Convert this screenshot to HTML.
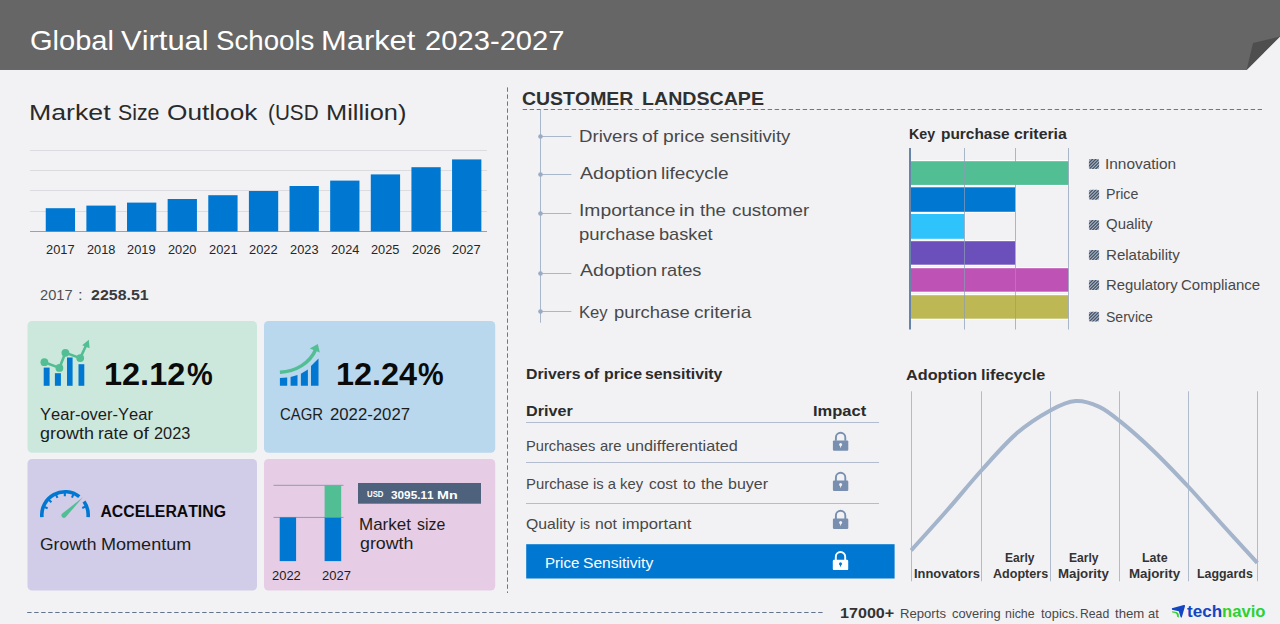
<!DOCTYPE html>
<html><head><meta charset="utf-8"><title>Global Virtual Schools Market 2023-2027</title>
<style>
html,body{margin:0;padding:0;}
body{width:1280px;height:624px;overflow:hidden;background:#f2f2f5;font-family:"Liberation Sans",sans-serif;position:relative;font-kerning:none;}
svg{position:absolute;left:0;top:0;}
span{position:absolute;white-space:nowrap;display:block;transform-origin:0 0;}
</style></head><body>
<svg width="1280" height="624" viewBox="0 0 1280 624">
<polygon points="0,0 1280,0 1280,36.5 1246.6,70 0,70" fill="#666666"/>
<polygon points="1246.6,70 1253,43 1280,36.5" fill="#4e4e4e"/>
<rect x="30" y="150" width="457" height="1" fill="#dcdce0"/>
<rect x="30" y="170" width="457" height="1" fill="#dcdce0"/>
<rect x="30" y="190" width="457" height="1" fill="#dcdce0"/>
<rect x="30" y="211" width="457" height="1" fill="#dcdce0"/>
<rect x="30" y="231" width="457" height="1" fill="#a0a0a4"/>
<rect x="45.75" y="208.2" width="29.3" height="23.20" fill="#0078d2"/>
<rect x="86.38" y="205.6" width="29.3" height="25.80" fill="#0078d2"/>
<rect x="127.01" y="202.6" width="29.3" height="28.80" fill="#0078d2"/>
<rect x="167.64" y="199" width="29.3" height="32.40" fill="#0078d2"/>
<rect x="208.27" y="195.2" width="29.3" height="36.20" fill="#0078d2"/>
<rect x="248.90" y="191" width="29.3" height="40.40" fill="#0078d2"/>
<rect x="289.53" y="186" width="29.3" height="45.40" fill="#0078d2"/>
<rect x="330.16" y="180.6" width="29.3" height="50.80" fill="#0078d2"/>
<rect x="370.79" y="174.4" width="29.3" height="57.00" fill="#0078d2"/>
<rect x="411.42" y="167.2" width="29.3" height="64.20" fill="#0078d2"/>
<rect x="452.05" y="159.4" width="29.3" height="72.00" fill="#0078d2"/>
<rect x="27.5" y="321" width="229.5" height="131.8" rx="4.5" fill="#cce8dd"/>
<rect x="264" y="321" width="231.2" height="131.8" rx="4.5" fill="#b9d7ed"/>
<rect x="27.5" y="459" width="229.5" height="131.6" rx="4.5" fill="#d1cce8"/>
<rect x="264" y="459" width="231.2" height="131.6" rx="4.5" fill="#e6cde5"/>
<rect x="43.7" y="367.6" width="5.9" height="18.20" fill="#0078d2"/>
<rect x="54.9" y="373.2" width="6" height="12.60" fill="#0078d2"/>
<rect x="67" y="357.5" width="5.6" height="28.30" fill="#0078d2"/>
<rect x="78.5" y="364.2" width="5.8" height="21.60" fill="#0078d2"/>
<polyline points="44.4,362.2 59.4,367.9 65.4,352.8 80.2,358.1 87,343.5" fill="none" stroke="#52be94" stroke-width="2.6" stroke-linejoin="round"/>
<circle cx="44.4" cy="362.2" r="3.9" fill="#52be94"/>
<circle cx="59.4" cy="367.9" r="3.9" fill="#52be94"/>
<circle cx="65.4" cy="352.8" r="3.9" fill="#52be94"/>
<circle cx="80.2" cy="358.1" r="3.9" fill="#52be94"/>
<polygon points="88.8,339.8 82.2,345.2 89.6,348.2" fill="#52be94"/>
<polygon points="279.9,378 287.2,377.6 287.2,385.8 279.9,385.8" fill="#0078d2"/>
<polygon points="290.6,377.1 297.5,374.9 297.5,385.8 290.6,385.8" fill="#0078d2"/>
<polygon points="300.9,373.8 307.9,369.5 307.9,385.8 300.9,385.8" fill="#0078d2"/>
<polygon points="311,365.9 318.5,358.6 318.5,385.8 311,385.8" fill="#0078d2"/>
<path d="M279.9,372.3 C296,371.5 310,363 316,349" fill="none" stroke="#52be94" stroke-width="3.4"/>
<polygon points="309.8,348.6 317.8,343.9 319.8,352.6" fill="#52be94"/>
<path d="M41.91,517.12 A23.2,23.2 0 0 1 79.28,496.62" fill="none" stroke="#0078d2" stroke-width="3.6"/>
<path d="M84.00,501.59 A23.2,23.2 0 0 1 88.09,517.12" fill="none" stroke="#0078d2" stroke-width="3.6"/>
<line x1="44.27" y1="506.94" x2="47.64" y2="508.23" stroke="#0078d2" stroke-width="2.1"/>
<line x1="48.76" y1="499.76" x2="51.40" y2="502.21" stroke="#0078d2" stroke-width="2.1"/>
<line x1="55.97" y1="494.62" x2="57.43" y2="497.91" stroke="#0078d2" stroke-width="2.1"/>
<line x1="64.81" y1="492.70" x2="64.84" y2="496.30" stroke="#0078d2" stroke-width="2.1"/>
<line x1="73.32" y1="494.32" x2="71.97" y2="497.65" stroke="#0078d2" stroke-width="2.1"/>
<line x1="85.58" y1="506.58" x2="82.25" y2="507.93" stroke="#0078d2" stroke-width="2.1"/>
<path d="M82.9,497.2 L62.3,513.6 A2.4,2.4 0 0 0 65.6,517.3 Z" fill="#52be94"/>
<rect x="273.5" y="484.8" width="70" height="1" fill="#8a9bb5"/>
<rect x="273.5" y="516.9" width="70" height="1" fill="#8a9bb5"/>
<rect x="279.7" y="517.4" width="16.4" height="43.7" fill="#0078d2"/>
<rect x="324.6" y="517.4" width="16.6" height="43.7" fill="#0078d2"/>
<rect x="324.6" y="485.3" width="16.6" height="32.1" fill="#52be94"/>
<rect x="358" y="483" width="123" height="20.7" fill="#4f627d"/>
<line x1="507.5" y1="87.4" x2="507.5" y2="593" stroke="#64789a" stroke-width="1" stroke-dasharray="4.4,2.6"/>
<line x1="522.7" y1="109.5" x2="1262" y2="109.5" stroke="#64789a" stroke-width="1" stroke-dasharray="4.4,2.6"/>
<line x1="27.2" y1="612.5" x2="823.2" y2="612.5" stroke="#62748c" stroke-width="1" stroke-dasharray="4.4,2.6"/>
<rect x="540" y="109.4" width="1" height="213.3" fill="#a9b7ca"/>
<rect x="540.4" y="136" width="31" height="1" fill="#a9b7ca"/>
<circle cx="540.5" cy="136.5" r="2.3" fill="#9aabc2"/>
<rect x="540.4" y="174" width="31" height="1" fill="#a9b7ca"/>
<circle cx="540.5" cy="174.5" r="2.3" fill="#9aabc2"/>
<rect x="540.4" y="213" width="31" height="1" fill="#a9b7ca"/>
<circle cx="540.5" cy="213.5" r="2.3" fill="#9aabc2"/>
<rect x="540.4" y="273" width="31" height="1" fill="#a9b7ca"/>
<circle cx="540.5" cy="273.5" r="2.3" fill="#9aabc2"/>
<rect x="540.4" y="311" width="31" height="1" fill="#a9b7ca"/>
<circle cx="540.5" cy="311.5" r="2.3" fill="#9aabc2"/>
<rect x="910.5" y="160.1" width="158.9" height="25.9" fill="#ffffff"/>
<rect x="910.5" y="161.2" width="157.9" height="23.7" fill="#52be94"/>
<rect x="910.5" y="186.2" width="105.7" height="26.7" fill="#ffffff"/>
<rect x="910.5" y="187.3" width="104.7" height="24.5" fill="#0078d2"/>
<rect x="910.5" y="212.9" width="54.9" height="27.0" fill="#ffffff"/>
<rect x="910.5" y="214" width="53.9" height="24.8" fill="#2fc3fb"/>
<rect x="910.5" y="240.1" width="105.7" height="25.7" fill="#ffffff"/>
<rect x="910.5" y="241.2" width="104.7" height="23.5" fill="#6b50bc"/>
<rect x="910.5" y="267.1" width="158.9" height="25.7" fill="#ffffff"/>
<rect x="910.5" y="268.2" width="157.9" height="23.5" fill="#be52b5"/>
<rect x="910.5" y="294.1" width="158.9" height="25.7" fill="#ffffff"/>
<rect x="910.5" y="295.2" width="157.9" height="23.5" fill="#bdb853"/>
<rect x="964" y="148" width="1" height="181.5" fill="#8a9bb5" fill-opacity="0.7"/>
<rect x="1015" y="148" width="1" height="181.5" fill="#8a9bb5" fill-opacity="0.7"/>
<rect x="1068" y="148" width="1" height="181.5" fill="#8a9bb5" fill-opacity="0.7"/>
<rect x="909" y="148" width="2" height="181.5" fill="#6685a8"/>
<defs><clipPath id="lc"><rect x="0" y="0" width="10.2" height="9.9" rx="1.7"/></clipPath><g id="lg" clip-path="url(#lc)"><rect width="10.2" height="9.9" fill="#a8bfdd"/><g stroke="#4b5159" stroke-width="1.3"><line x1="-11.3" y1="12" x2="2.6999999999999993" y2="-2"/><line x1="-8.100000000000001" y1="12" x2="5.899999999999999" y2="-2"/><line x1="-4.9" y1="12" x2="9.1" y2="-2"/><line x1="-1.6999999999999993" y1="12" x2="12.3" y2="-2"/><line x1="1.5" y1="12" x2="15.5" y2="-2"/><line x1="4.699999999999999" y1="12" x2="18.7" y2="-2"/><line x1="7.900000000000002" y1="12" x2="21.900000000000002" y2="-2"/><line x1="11.100000000000001" y1="12" x2="25.1" y2="-2"/></g></g></defs>
<use href="#lg" x="1088.9" y="159.0"/>
<use href="#lg" x="1088.9" y="189.8"/>
<use href="#lg" x="1088.9" y="220.1"/>
<use href="#lg" x="1088.9" y="250.0"/>
<use href="#lg" x="1088.9" y="280.1"/>
<use href="#lg" x="1088.9" y="311.7"/>
<rect x="526" y="422" width="353" height="1" fill="#b3bdcf"/>
<rect x="526" y="462" width="353" height="1" fill="#b3bdcf"/>
<rect x="526" y="503" width="353" height="1" fill="#b3bdcf"/>
<rect x="526.2" y="544.2" width="368.4" height="34.3" fill="#0078d2"/>
<rect x="832.90" y="440.40" width="15.4" height="10.4" rx="1.2" fill="#788fb0"/><path d="M835.90,440.80 V437.40 A4.7,4.7 0 0 1 845.30,437.40 V440.80" fill="none" stroke="#788fb0" stroke-width="1.9"/><circle cx="840.60" cy="444.40" r="1.5" fill="#f2f2f5"/><polygon points="839.70,445.00 841.50,445.00 840.60,448.20" fill="#f2f2f5"/>
<rect x="832.90" y="480.50" width="15.4" height="10.4" rx="1.2" fill="#788fb0"/><path d="M835.90,480.90 V477.50 A4.7,4.7 0 0 1 845.30,477.50 V480.90" fill="none" stroke="#788fb0" stroke-width="1.9"/><circle cx="840.60" cy="484.50" r="1.5" fill="#f2f2f5"/><polygon points="839.70,485.10 841.50,485.10 840.60,488.30" fill="#f2f2f5"/>
<rect x="832.90" y="518.50" width="15.4" height="10.4" rx="1.2" fill="#788fb0"/><path d="M835.90,518.90 V515.50 A4.7,4.7 0 0 1 845.30,515.50 V518.90" fill="none" stroke="#788fb0" stroke-width="1.9"/><circle cx="840.60" cy="522.50" r="1.5" fill="#f2f2f5"/><polygon points="839.70,523.10 841.50,523.10 840.60,526.30" fill="#f2f2f5"/>
<rect x="832.80" y="559.70" width="15.4" height="10.4" rx="1.2" fill="#ffffff"/><path d="M835.80,560.10 V556.70 A4.7,4.7 0 0 1 845.20,556.70 V560.10" fill="none" stroke="#ffffff" stroke-width="1.9"/><circle cx="840.50" cy="563.70" r="1.5" fill="#0078d2"/><polygon points="839.60,564.30 841.40,564.30 840.50,567.50" fill="#0078d2"/>
<rect x="911" y="391.3" width="1" height="190" fill="#b0bccd"/>
<rect x="981" y="391.3" width="1" height="190" fill="#b0bccd"/>
<rect x="1050" y="391.3" width="1" height="190" fill="#b0bccd"/>
<rect x="1119" y="391.3" width="1" height="190" fill="#b0bccd"/>
<rect x="1188" y="391.3" width="1" height="190" fill="#b0bccd"/>
<rect x="1257" y="391.3" width="1" height="190" fill="#b0bccd"/>
<path d="M911.2,550.3 C917.1,543.8 934.7,524.4 946.5,511.0 C958.3,497.6 970.0,483.0 981.8,470.0 C993.5,457.0 1005.5,443.1 1017.0,433.1 C1028.5,423.1 1040.9,415.6 1050.7,410.2 C1060.5,404.8 1067.7,401.6 1075.7,401.0 C1083.7,400.4 1091.5,403.3 1098.8,406.6 C1106.1,409.9 1110.5,413.5 1119.6,420.9 C1128.7,428.2 1141.8,439.7 1153.3,450.7 C1164.8,461.7 1177.1,474.7 1188.6,487.0 C1200.1,499.3 1210.8,511.9 1222.2,524.5 C1233.7,537.1 1251.5,556.4 1257.3,562.8" fill="none" stroke="#a3b4cb" stroke-width="4" stroke-linecap="butt"/>
<path d="M1171.9,608.3 L1183.8,605.1 Q1185.3,604.8 1185,606.3 L1181.9,617.1 Q1181.3,618.2 1180.6,617 L1178.8,611.3 L1172,609.8 Z" fill="#1446c4"/>
<path d="M1172.1,611.2 L1176.6,611.9 Q1178.5,612.5 1178.7,614.2 L1178.9,617.4 L1177.3,617 L1176.6,614.3 Q1176.2,613.2 1175.1,613 L1172.1,612.4 Z" fill="#2fd032"/>
</svg>
<span style="left:29.69px;top:24px;font-size:28.5px;line-height:32px;color:#ffffff;transform:scaleX(1.0184);">Global</span>
<span style="left:120.91px;top:24px;font-size:28.5px;line-height:32px;color:#ffffff;transform:scaleX(1.0857);">Virtual</span>
<span style="left:215.89px;top:24px;font-size:28.5px;line-height:32px;color:#ffffff;transform:scaleX(0.9710);">Schools</span>
<span style="left:321.12px;top:24px;font-size:28.5px;line-height:32px;color:#ffffff;transform:scaleX(1.0833);">Market</span>
<span style="left:425.38px;top:24px;font-size:28.5px;line-height:32px;color:#ffffff;transform:scaleX(1.0238);">2023-2027</span>
<span style="left:28.96px;top:100px;font-size:22px;line-height:25px;color:#2a2a2a;transform:scaleX(1.2134);">Market</span>
<span style="left:117.68px;top:100px;font-size:22px;line-height:25px;color:#2a2a2a;transform:scaleX(0.9677);">Size</span>
<span style="left:167.41px;top:100px;font-size:22px;line-height:25px;color:#2a2a2a;transform:scaleX(1.1924);">Outlook</span>
<span style="left:267.97px;top:100px;font-size:22px;line-height:25px;color:#2a2a2a;transform:scaleX(0.9404);">(USD</span>
<span style="left:325.97px;top:100px;font-size:22px;line-height:25px;color:#2a2a2a;transform:scaleX(1.1533);">Million)</span>
<span style="left:46.10px;top:242px;font-size:13.33px;line-height:15px;color:#262626;transform:scaleX(0.9642);">2017</span>
<span style="left:86.74px;top:242px;font-size:13.33px;line-height:15px;color:#262626;transform:scaleX(0.9611);">2018</span>
<span style="left:127.36px;top:242px;font-size:13.33px;line-height:15px;color:#262626;transform:scaleX(0.9629);">2019</span>
<span style="left:168.00px;top:242px;font-size:13.33px;line-height:15px;color:#262626;transform:scaleX(0.9591);">2020</span>
<span style="left:208.62px;top:242px;font-size:13.33px;line-height:15px;color:#262626;transform:scaleX(0.9635);">2021</span>
<span style="left:249.25px;top:242px;font-size:13.33px;line-height:15px;color:#262626;transform:scaleX(0.9642);">2022</span>
<span style="left:289.89px;top:242px;font-size:13.33px;line-height:15px;color:#262626;transform:scaleX(0.9613);">2023</span>
<span style="left:330.52px;top:242px;font-size:13.33px;line-height:15px;color:#262626;transform:scaleX(0.9548);">2024</span>
<span style="left:371.15px;top:242px;font-size:13.33px;line-height:15px;color:#262626;transform:scaleX(0.9605);">2025</span>
<span style="left:411.78px;top:242px;font-size:13.33px;line-height:15px;color:#262626;transform:scaleX(0.9613);">2026</span>
<span style="left:452.40px;top:242px;font-size:13.33px;line-height:15px;color:#262626;transform:scaleX(0.9642);">2027</span>
<span style="left:40.11px;top:286px;font-size:15.3px;line-height:17px;color:#505050;transform:scaleX(0.9585);">2017</span>
<span style="left:78.12px;top:286px;font-size:15.3px;line-height:17px;color:#505050;transform:scaleX(1.0983);">:</span>
<span style="left:90.60px;top:286px;font-size:15.3px;line-height:17px;font-weight:700;color:#3a3a3a;transform:scaleX(1.0433);">2258.51</span>
<span style="left:104.21px;top:356px;font-size:32px;line-height:36px;font-weight:700;color:#0a0a0a;transform:scaleX(1.0146);">12.12</span>
<span style="left:187.28px;top:356px;font-size:32px;line-height:36px;font-weight:700;color:#0a0a0a;transform:scaleX(0.9044);">%</span>
<span style="left:40.19px;top:406px;font-size:15.8px;line-height:17px;color:#1c1c1c;transform:scaleX(1.0456);">Year-over-Year</span>
<span style="left:39.80px;top:425px;font-size:15.8px;line-height:17px;color:#1c1c1c;transform:scaleX(1.1359);">growth</span>
<span style="left:98.49px;top:425px;font-size:15.8px;line-height:17px;color:#1c1c1c;transform:scaleX(1.1070);">rate</span>
<span style="left:133.20px;top:425px;font-size:15.8px;line-height:17px;color:#1c1c1c;transform:scaleX(1.2085);">of</span>
<span style="left:154.18px;top:425px;font-size:15.8px;line-height:17px;color:#1c1c1c;transform:scaleX(1.0324);">2023</span>
<span style="left:335.71px;top:356px;font-size:32px;line-height:36px;font-weight:700;color:#0a0a0a;transform:scaleX(1.0130);">12.24</span>
<span style="left:418.28px;top:356px;font-size:32px;line-height:36px;font-weight:700;color:#0a0a0a;transform:scaleX(0.9007);">%</span>
<span style="left:280.09px;top:406px;font-size:15.9px;line-height:17px;color:#1c1c1c;transform:scaleX(0.9393);">CAGR</span>
<span style="left:330.01px;top:406px;font-size:15.9px;line-height:17px;color:#1c1c1c;transform:scaleX(1.0532);">2022-2027</span>
<span style="left:100.46px;top:503px;font-size:15.8px;line-height:17px;font-weight:700;color:#0a0a0a;">ACCELERATING</span>
<span style="left:39.67px;top:536px;font-size:15.8px;line-height:17px;color:#1c1c1c;transform:scaleX(1.1078);">Growth</span>
<span style="left:100.67px;top:536px;font-size:15.8px;line-height:17px;color:#1c1c1c;transform:scaleX(1.1423);">Momentum</span>
<span style="left:272.00px;top:568px;font-size:13.6px;line-height:15px;color:#1c1c1c;transform:scaleX(0.9520);">2022</span>
<span style="left:322.10px;top:568px;font-size:13.6px;line-height:15px;color:#1c1c1c;transform:scaleX(0.9555);">2027</span>
<span style="left:367.18px;top:488px;font-size:9.5px;line-height:11px;font-weight:700;color:#ffffff;transform:scaleX(0.8225);">USD</span>
<span style="left:390.88px;top:489px;font-size:11.2px;line-height:12px;font-weight:700;color:#ffffff;transform:scaleX(1.0522);">3095.11</span>
<span style="left:436.89px;top:489px;font-size:11.2px;line-height:12px;font-weight:700;color:#ffffff;transform:scaleX(1.2765);">Mn</span>
<span style="left:359.46px;top:515px;font-size:16.2px;line-height:18px;color:#1c1c1c;transform:scaleX(1.0486);">Market</span>
<span style="left:417.31px;top:515px;font-size:16.2px;line-height:18px;color:#1c1c1c;transform:scaleX(0.9805);">size</span>
<span style="left:360.10px;top:534px;font-size:16.2px;line-height:18px;color:#1c1c1c;transform:scaleX(1.1004);">growth</span>
<span style="left:522.15px;top:88px;font-size:19px;line-height:21px;font-weight:700;color:#303030;transform:scaleX(1.0246);">CUSTOMER</span>
<span style="left:642.34px;top:88px;font-size:19px;line-height:21px;font-weight:700;color:#303030;transform:scaleX(1.0317);">LANDSCAPE</span>
<span style="left:578.82px;top:127px;font-size:17px;line-height:19px;color:#484848;transform:scaleX(1.0961);">Drivers</span>
<span style="left:642.24px;top:127px;font-size:17px;line-height:19px;color:#484848;transform:scaleX(1.1343);">of</span>
<span style="left:662.81px;top:127px;font-size:17px;line-height:19px;color:#484848;transform:scaleX(1.1316);">price</span>
<span style="left:709.53px;top:127px;font-size:17px;line-height:19px;color:#484848;transform:scaleX(1.0905);">sensitivity</span>
<span style="left:579.61px;top:164px;font-size:17px;line-height:19px;color:#484848;transform:scaleX(1.1520);">Adoption</span>
<span style="left:661.47px;top:164px;font-size:17px;line-height:19px;color:#484848;transform:scaleX(1.1185);">lifecycle</span>
<span style="left:578.67px;top:201px;font-size:17px;line-height:19px;color:#484848;transform:scaleX(1.1340);">Importance</span>
<span style="left:679.29px;top:201px;font-size:17px;line-height:19px;color:#484848;transform:scaleX(1.1920);">in</span>
<span style="left:699.87px;top:201px;font-size:17px;line-height:19px;color:#484848;transform:scaleX(1.1008);">the</span>
<span style="left:731.55px;top:201px;font-size:17px;line-height:19px;color:#484848;transform:scaleX(1.1044);">customer</span>
<span style="left:578.96px;top:225px;font-size:17px;line-height:19px;color:#484848;transform:scaleX(1.0869);">purchase</span>
<span style="left:659.28px;top:225px;font-size:17px;line-height:19px;color:#484848;transform:scaleX(1.0703);">basket</span>
<span style="left:579.71px;top:261px;font-size:17px;line-height:19px;color:#484848;transform:scaleX(1.1504);">Adoption</span>
<span style="left:661.24px;top:261px;font-size:17px;line-height:19px;color:#484848;transform:scaleX(1.0693);">rates</span>
<span style="left:579.18px;top:303px;font-size:17px;line-height:19px;color:#484848;transform:scaleX(0.9797);">Key</span>
<span style="left:614.36px;top:303px;font-size:17px;line-height:19px;color:#484848;transform:scaleX(1.0825);">purchase</span>
<span style="left:694.44px;top:303px;font-size:17px;line-height:19px;color:#484848;transform:scaleX(1.1236);">criteria</span>
<span style="left:908.90px;top:126px;font-size:14.5px;line-height:16px;font-weight:700;color:#2b2b2b;transform:scaleX(0.9823);">Key</span>
<span style="left:940.73px;top:126px;font-size:14.5px;line-height:16px;font-weight:700;color:#2b2b2b;transform:scaleX(1.0632);">purchase</span>
<span style="left:1013.53px;top:126px;font-size:14.5px;line-height:16px;font-weight:700;color:#2b2b2b;transform:scaleX(1.0921);">criteria</span>
<span style="left:1105.43px;top:156px;font-size:14.6px;line-height:16px;color:#484848;transform:scaleX(1.0556);">Innovation</span>
<span style="left:1105.68px;top:186px;font-size:14.6px;line-height:16px;color:#484848;transform:scaleX(0.9740);">Price</span>
<span style="left:1106.14px;top:216px;font-size:14.6px;line-height:16px;color:#484848;transform:scaleX(1.0242);">Quality</span>
<span style="left:1105.61px;top:247px;font-size:14.6px;line-height:16px;color:#484848;transform:scaleX(1.0330);">Relatability</span>
<span style="left:1105.63px;top:277px;font-size:14.6px;line-height:16px;color:#484848;transform:scaleX(1.0162);">Regulatory</span>
<span style="left:1180.79px;top:277px;font-size:14.6px;line-height:16px;color:#484848;transform:scaleX(1.0277);">Compliance</span>
<span style="left:1106.21px;top:309px;font-size:14.6px;line-height:16px;color:#484848;transform:scaleX(0.9626);">Service</span>
<span style="left:525.89px;top:366px;font-size:14.6px;line-height:16px;font-weight:700;color:#2b2b2b;transform:scaleX(1.0831);">Drivers</span>
<span style="left:584.22px;top:366px;font-size:14.6px;line-height:16px;font-weight:700;color:#2b2b2b;transform:scaleX(1.1029);">of</span>
<span style="left:603.60px;top:366px;font-size:14.6px;line-height:16px;font-weight:700;color:#2b2b2b;transform:scaleX(1.0887);">price</span>
<span style="left:644.99px;top:366px;font-size:14.6px;line-height:16px;font-weight:700;color:#2b2b2b;transform:scaleX(1.0845);">sensitivity</span>
<span style="left:525.87px;top:403px;font-size:14.6px;line-height:16px;font-weight:700;color:#2b2b2b;transform:scaleX(1.1072);">Driver</span>
<span style="left:813.15px;top:403px;font-size:14.6px;line-height:16px;font-weight:700;color:#2b2b2b;transform:scaleX(1.1306);">Impact</span>
<span style="left:525.75px;top:438px;font-size:14.5px;line-height:16px;color:#484848;transform:scaleX(1.0121);">Purchases</span>
<span style="left:599.92px;top:438px;font-size:14.5px;line-height:16px;color:#484848;transform:scaleX(1.0255);">are</span>
<span style="left:625.50px;top:438px;font-size:14.5px;line-height:16px;color:#484848;transform:scaleX(1.1174);">undifferentiated</span>
<span style="left:525.73px;top:476px;font-size:14.5px;line-height:16px;color:#484848;transform:scaleX(1.0249);">Purchase</span>
<span style="left:593.06px;top:476px;font-size:14.5px;line-height:16px;color:#484848;transform:scaleX(1.0195);">is a key</span>
<span style="left:649.10px;top:476px;font-size:14.5px;line-height:16px;color:#484848;transform:scaleX(1.0630);">cost</span>
<span style="left:682.62px;top:476px;font-size:14.5px;line-height:16px;color:#484848;transform:scaleX(1.0387);">to</span>
<span style="left:700.91px;top:476px;font-size:14.5px;line-height:16px;color:#484848;transform:scaleX(1.0988);">the</span>
<span style="left:727.92px;top:476px;font-size:14.5px;line-height:16px;color:#484848;transform:scaleX(1.1027);">buyer</span>
<span style="left:526.20px;top:516px;font-size:14.5px;line-height:16px;color:#484848;transform:scaleX(1.0875);">Quality</span>
<span style="left:580.31px;top:516px;font-size:14.5px;line-height:16px;color:#484848;transform:scaleX(0.9691);">is</span>
<span style="left:595.01px;top:516px;font-size:14.5px;line-height:16px;color:#484848;transform:scaleX(1.0845);">not</span>
<span style="left:622.24px;top:516px;font-size:14.5px;line-height:16px;color:#484848;transform:scaleX(1.1471);">important</span>
<span style="left:544.51px;top:555px;font-size:14.8px;line-height:16px;color:#ffffff;transform:scaleX(1.0173);">Price</span>
<span style="left:583.14px;top:555px;font-size:14.8px;line-height:16px;color:#ffffff;transform:scaleX(1.0543);">Sensitivity</span>
<span style="left:906.10px;top:367px;font-size:14.5px;line-height:16px;font-weight:700;color:#2b2b2b;transform:scaleX(1.1202);">Adoption</span>
<span style="left:980.81px;top:367px;font-size:14.5px;line-height:16px;font-weight:700;color:#2b2b2b;transform:scaleX(1.1215);">lifecycle</span>
<span style="left:914.19px;top:567px;font-size:12.7px;line-height:14px;font-weight:700;color:#333333;transform:scaleX(1.0165);">Innovators</span>
<span style="left:1005.14px;top:551px;font-size:12.7px;line-height:14px;font-weight:700;color:#333333;transform:scaleX(0.9486);">Early</span>
<span style="left:992.74px;top:567px;font-size:12.7px;line-height:14px;font-weight:700;color:#333333;transform:scaleX(0.9908);">Adopters</span>
<span style="left:1069.24px;top:551px;font-size:12.7px;line-height:14px;font-weight:700;color:#333333;transform:scaleX(0.9519);">Early</span>
<span style="left:1058.26px;top:567px;font-size:12.7px;line-height:14px;font-weight:700;color:#333333;transform:scaleX(1.0445);">Majority</span>
<span style="left:1142.22px;top:551px;font-size:12.7px;line-height:14px;font-weight:700;color:#333333;transform:scaleX(0.9827);">Late</span>
<span style="left:1129.26px;top:567px;font-size:12.7px;line-height:14px;font-weight:700;color:#333333;transform:scaleX(1.0508);">Majority</span>
<span style="left:1197.22px;top:567px;font-size:12.7px;line-height:14px;font-weight:700;color:#333333;transform:scaleX(0.9768);">Laggards</span>
<span style="left:840.43px;top:605px;font-size:14.8px;line-height:16px;font-weight:700;color:#333333;transform:scaleX(1.0898);">17000+</span>
<span style="left:900.37px;top:606px;font-size:13px;line-height:15px;color:#484848;transform:scaleX(1.0095);">Reports</span>
<span style="left:951.90px;top:606px;font-size:13px;line-height:15px;color:#484848;transform:scaleX(0.9906);">covering</span>
<span style="left:1004.73px;top:606px;font-size:13px;line-height:15px;color:#484848;transform:scaleX(0.9515);">niche</span>
<span style="left:1040.65px;top:606px;font-size:13px;line-height:15px;color:#484848;transform:scaleX(0.9920);">topics.</span>
<span style="left:1080.25px;top:606px;font-size:13px;line-height:15px;color:#484848;transform:scaleX(0.9392);">Read</span>
<span style="left:1114.75px;top:606px;font-size:13px;line-height:15px;color:#484848;transform:scaleX(1.0127);">them</span>
<span style="left:1148.40px;top:606px;font-size:13px;line-height:15px;color:#484848;transform:scaleX(0.9907);">at</span>
<span style="left:1187.24px;top:603px;font-size:16px;line-height:17px;font-weight:700;color:#1446c4;transform:scaleX(1.0659);">tech</span>
<span style="left:1222.35px;top:603px;font-size:16px;line-height:17px;font-weight:700;color:#2fd032;transform:scaleX(1.0397);">navio</span>
</body></html>
